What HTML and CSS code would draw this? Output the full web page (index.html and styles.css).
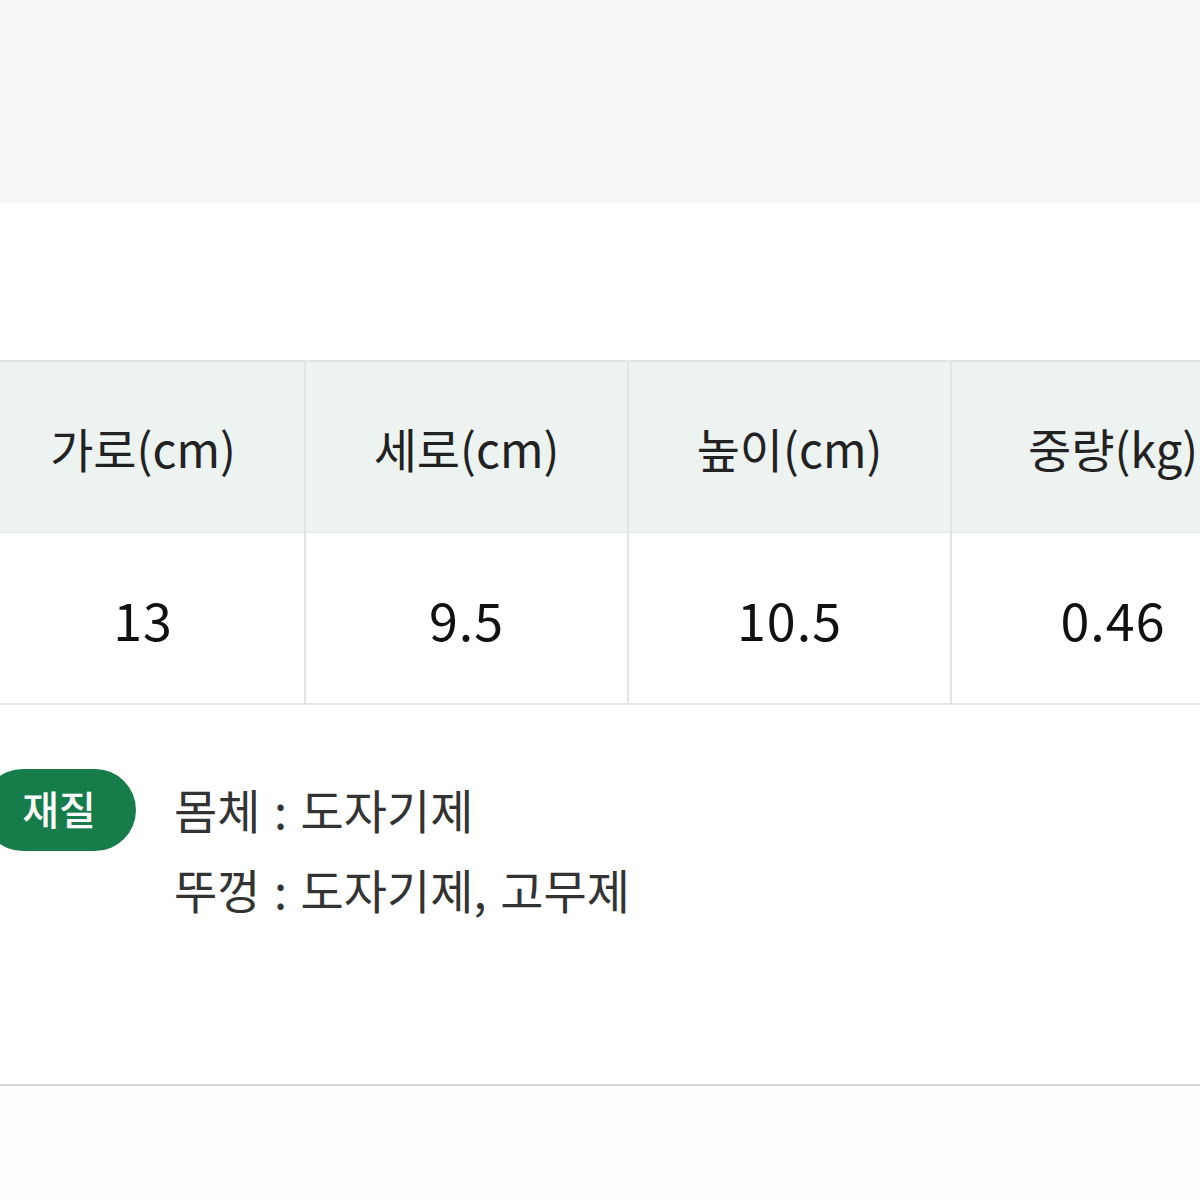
FILE: index.html
```html
<!DOCTYPE html>
<html>
<head>
    <link rel="stylesheet" href="styles.css">
</head>
<body>
    <div class="top-band"></div>

    <div class="spec">
        <table class="spec-table">
            <tr>
                <th>가로(cm)</th>
                <th>세로(cm)</th>
                <th>높이(cm)</th>
                <th>중량(kg)</th>
            </tr>
            <tr>
                <td>13</td>
                <td>9.5</td>
                <td>10.5</td>
                <td>0.46</td>
            </tr>
        </table>

        <div class="material">
            <span class="badge">재질</span>
            <div class="material-list">
                <p>몸체 : 도자기제</p>
                <p>뚜껑 : 도자기제, 고무제</p>
            </div>
        </div>
    </div>

    <div class="bottom-area"></div>
</body>
</html>
```

FILE: styles.css
```css
body {
    margin: 0;
    padding: 0;
    background-color: white;
    font-family: "Noto Sans CJK KR", "Noto Sans", sans-serif;
    color: #222;
    overflow: hidden;
}

.top-band {
    height: 203px;
    background-color: #f7f7f7;
}

.spec {
    width: 1292px;
    margin-left: -18px;
    padding-top: 157px;
}

.spec-table {
    width: 100%;
    border-collapse: collapse;
    table-layout: fixed;
    border-top: 2px solid #dfe6e4;
    border-bottom: 2px solid #e3e6e6;
}

.spec-table th,
.spec-table td {
    text-align: center;
    border-left: 2px solid #e1e6e5;
    padding: 0;
}

.spec-table th:first-child,
.spec-table td:first-child {
    border-left: none;
}

.spec-table th {
    height: 170px;
    background-color: #edf3f1;
    font-weight: normal;
    font-size: 47px;
    color: #222;
    border-bottom: 1px solid #e3e8e7;
}

.spec-table td {
    height: 170px;
    font-size: 52px;
    letter-spacing: 1px;
    color: #111;
}

.material {
    display: flex;
    align-items: flex-start;
    gap: 38px;
    padding-top: 64px;
}

.badge {
    width: 154px;
    height: 82px;
    border-radius: 41px;
    background-color: #167c4a;
    color: white;
    font-size: 40px;
    font-weight: 500;
    display: flex;
    align-items: center;
    justify-content: center;
    padding-bottom: 4px;
    box-sizing: border-box;
}

.material-list p {
    margin: 0;
    font-size: 47px;
    line-height: 80px;
    word-spacing: 3px;
    color: #333;
}

.bottom-area {
    margin-top: 155px;
    border-top: 2px solid #d4d4d4;
    height: 120px;
    background-color: #fefefe;
}
```
